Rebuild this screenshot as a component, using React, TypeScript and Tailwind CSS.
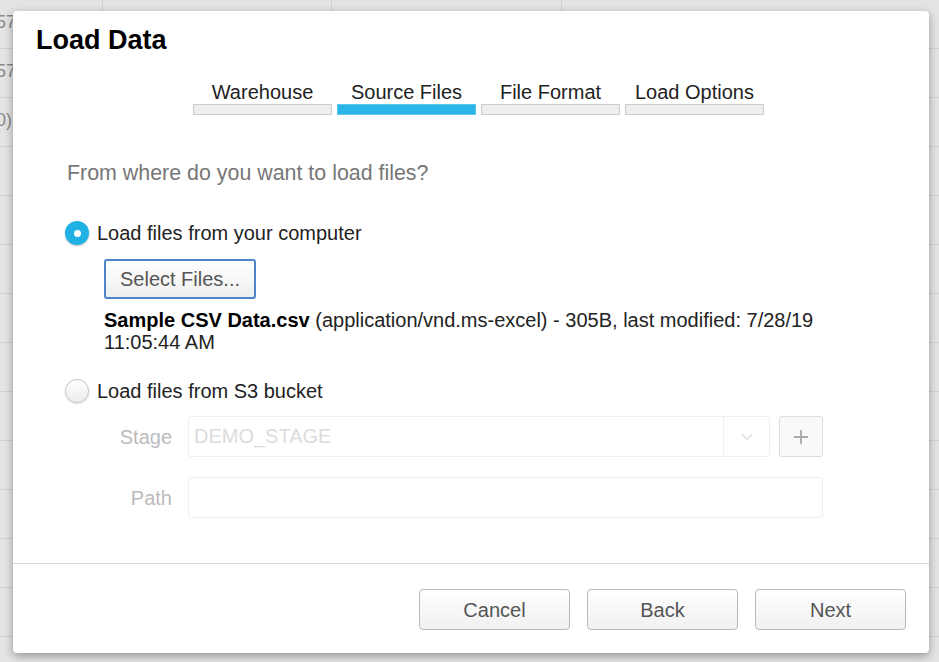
import { ChevronDown, Plus } from "lucide-react";

const tabs = ["Warehouse", "Source Files", "File Format", "Load Options"];
const bgRows = ["57", "57", "0)", "", "", "", "", "", "", "", "", "", ""];

const Radio = ({ checked }: { checked?: boolean }) =>
  checked ? (
    <span className="w-[24px] h-[24px] rounded-full bg-[#1fb1e3] flex items-center justify-center shadow-[0_1px_2px_rgba(0,0,0,0.25)]">
      <span className="w-[7px] h-[7px] rounded-full bg-white" />
    </span>
  ) : (
    <span className="w-[24px] h-[24px] rounded-full border border-[#c4c4c4] bg-gradient-to-b from-white to-[#ececec] shadow-[0_1px_2px_rgba(0,0,0,0.15)]" />
  );

const FooterButton = ({ label }: { label: string }) => (
  <button className="w-[151px] h-[41px] rounded-[4px] border border-[#b9b9b9] bg-gradient-to-b from-white to-[#f0f0f0] text-[20px] text-[#555]">
    {label}
  </button>
);

const App = () => {
  return (
    <div
      className="w-[939px] h-[662px] relative overflow-hidden bg-[#e4e4e4]"
      style={{ fontFamily: '"Liberation Sans", Arial, sans-serif' }}
    >
      {/* table behind the overlay */}
      <div className="flex flex-col">
        {bgRows.map((t, i) => (
          <div key={i} className="flex h-[49px] border-b border-[#d2d2d2]">
            <div className="w-[103px] border-r border-[#d2d2d2] text-[18px] text-[#8a8a8a] leading-[44px] overflow-hidden">
              <span className="block -ml-[4px]">{t}</span>
            </div>
            <div className="w-[229px] border-r border-[#d2d2d2]" />
            <div className="w-[230px] border-r border-[#d2d2d2]" />
            <div className="flex-1" />
          </div>
        ))}
      </div>

      {/* dialog */}
      <div className="absolute left-[13px] top-[11px] w-[916px] h-[642px] bg-white rounded-[4px] shadow-[0_3px_10px_rgba(0,0,0,0.35)] flex flex-col">
        <h1 className="pl-[23px] pt-[16px] text-[27px] leading-[27px] font-bold text-black">
          Load Data
        </h1>

        <div className="mt-[26px] pl-[180px] flex gap-[5px]">
          {tabs.map((t, i) => (
            <div key={t} className="w-[139px] flex flex-col items-center">
              <span className="text-[20px] leading-[24px] text-[#222]">{t}</span>
              <span
                className={`w-full h-[11px] border ${
                  i === 1
                    ? "bg-[#29b5e8] border-[#5cc6ec]"
                    : "bg-[#eeeeee] border-[#cccccc]"
                }`}
              />
            </div>
          ))}
        </div>

        <p className="mt-[46px] pl-[54px] text-[21.4px] leading-[24px] text-[#777]">
          From where do you want to load files?
        </p>

        <div className="mt-[36px] pl-[52px] flex items-center gap-[8px]">
          <Radio checked />
          <span className="text-[20px] leading-[24px] text-[#222]">
            Load files from your computer
          </span>
        </div>

        <div className="mt-[14px] pl-[91px]">
          <button className="w-[152px] h-[40px] rounded-[3px] border-2 border-[#4f84cc] bg-gradient-to-b from-white to-[#efefef] text-[20px] text-[#555]">
            Select Files...
          </button>
        </div>

        <p className="mt-[10px] ml-[91px] w-[740px] text-[20px] leading-[22px] text-[#222]">
          <span className="font-bold text-black">Sample CSV Data.csv</span>{" "}
          (application/vnd.ms-excel) - 305B, last modified: 7/28/19 11:05:44 AM
        </p>

        <div className="mt-[26px] pl-[52px] flex items-center gap-[8px]">
          <Radio />
          <span className="text-[20px] leading-[24px] text-[#222]">
            Load files from S3 bucket
          </span>
        </div>

        <div className="mt-[13px] flex items-center">
          <span className="w-[159px] text-right text-[20px] text-[#bbb]">Stage</span>
          <div className="ml-[16px] w-[582px] h-[41px] rounded-[3px] border border-[#eeeeee] flex">
            <span className="flex-1 pl-[5px] text-[20px] leading-[39px] text-[#dcdcdc]">
              DEMO_STAGE
            </span>
            <span className="w-[46px] border-l border-[#eeeeee] flex items-center justify-center">
              <ChevronDown size={18} strokeWidth={2} className="text-[#dddddd]" />
            </span>
          </div>
          <button className="ml-[9px] w-[44px] h-[41px] rounded-[3px] border border-[#dddddd] bg-[#f9f9f9] flex items-center justify-center">
            <Plus size={22} strokeWidth={2} className="text-[#aaaaaa]" />
          </button>
        </div>

        <div className="mt-[20px] flex items-center">
          <span className="w-[159px] text-right text-[20px] text-[#bbb]">Path</span>
          <div className="ml-[16px] w-[635px] h-[41px] rounded-[3px] border border-[#eeeeee]" />
        </div>

        <div className="flex-1" />

        <div className="border-t border-[#d8d8d8] h-[90px] pt-[25px] pr-[23px] flex justify-end gap-[17px]">
          <FooterButton label="Cancel" />
          <FooterButton label="Back" />
          <FooterButton label="Next" />
        </div>
      </div>
    </div>
  );
};

export default App;
